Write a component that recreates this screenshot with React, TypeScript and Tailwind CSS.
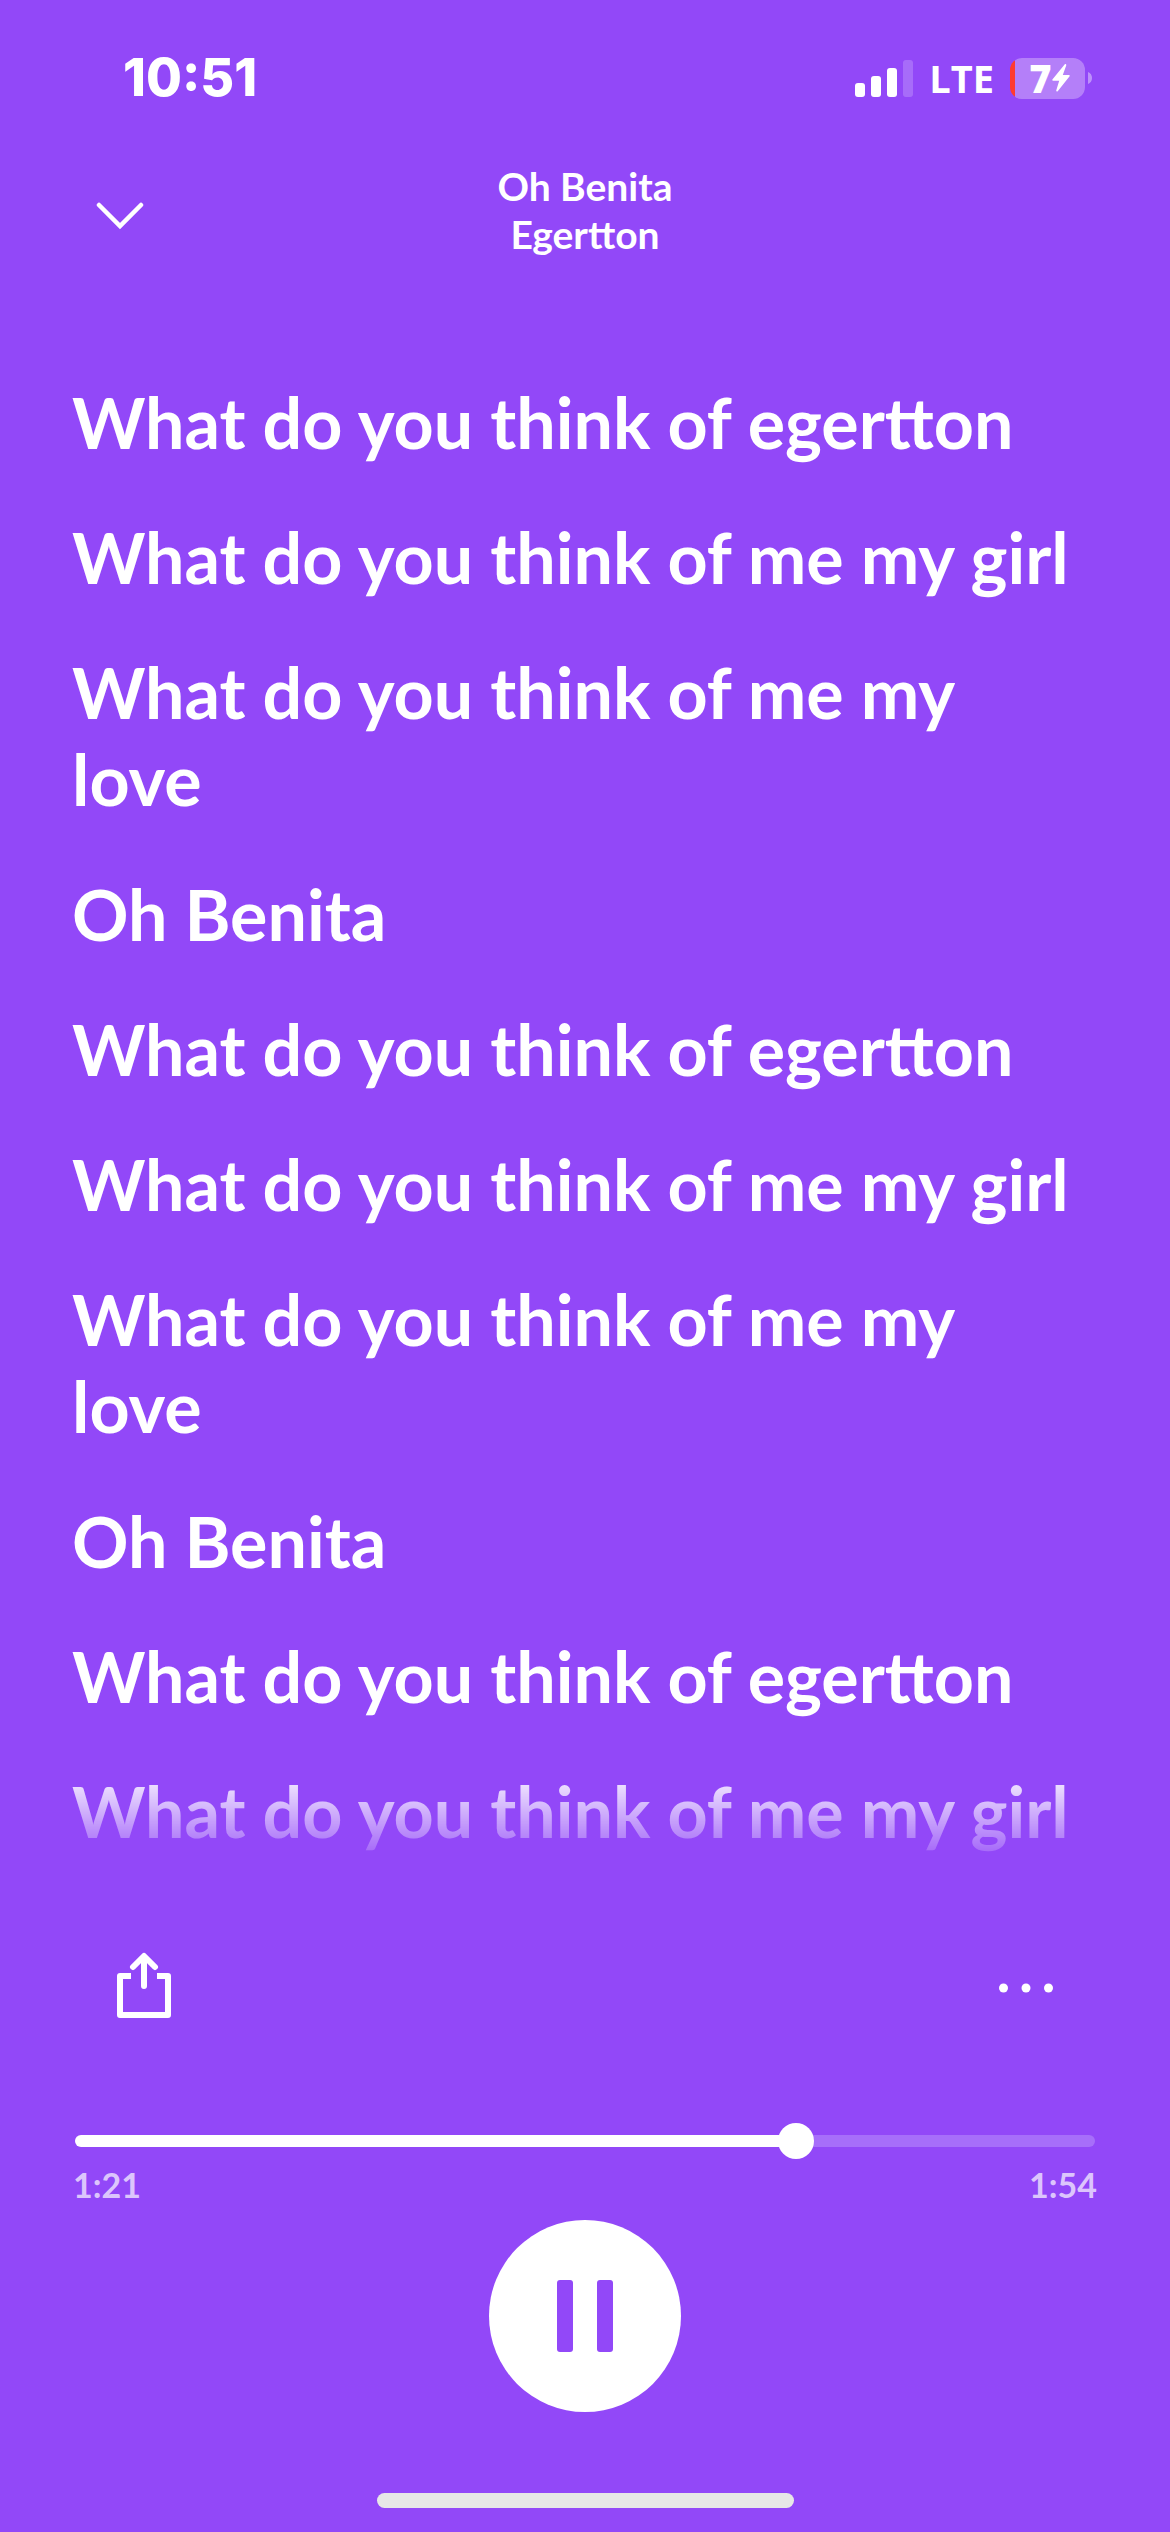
import React, { useState } from 'react';

const lyrics = [
  'What do you think of egertton',
  'What do you think of me my girl',
  'What do you think of me my love',
  'Oh Benita',
  'What do you think of egertton',
  'What do you think of me my girl',
  'What do you think of me my love',
  'Oh Benita',
  'What do you think of egertton',
  'What do you think of me my girl',
];

const StatusBar: React.FC = () => (
  <div className="flex h-[156px] items-center justify-between pl-[123px] pr-[78px] text-white">
    <span className="font-['Inter',sans-serif] text-[52px] leading-none font-extrabold">10:51</span>
    <div className="flex items-center gap-4">
      <svg width="58" height="38" viewBox="0 0 58 38" fill="currentColor" aria-label="Signal">
        <rect x="0" y="24" width="10" height="14" rx="3" />
        <rect x="16" y="17" width="10" height="21" rx="3" />
        <rect x="32" y="9" width="10" height="29" rx="3" />
        <rect x="48" y="1" width="10" height="37" rx="3" opacity="0.2" />
      </svg>
      <span className="font-['Open_Sans',sans-serif] text-[38px] leading-none font-bold">LTE</span>
      <div className="flex items-center gap-[3px]">
        <div className="flex h-[41px] w-[75px] items-center justify-center rounded-xl bg-[linear-gradient(to_right,#ff3b30_5px,#b47ff9_5px)] pl-1">
          <span className="font-['Open_Sans',sans-serif] text-[38px] leading-none font-extrabold">7</span>
          <svg width="18" height="28" viewBox="0 0 18 28" fill="currentColor" aria-label="Charging">
            <path d="M12.6.6.6 15.2c-.7.9-.4 1.5.6 1.5h6L4.3 26.2c-.4 1.3.8 1.8 1.6.8L17.4 12.5c.7-.9.4-1.5-.6-1.5h-6l3.4-9.6c.4-1.2-.8-1.8-1.6-.8Z" />
          </svg>
        </div>
        <svg width="4" height="12" viewBox="0 0 4 12" fill="#fff" opacity="0.4">
          <path d="M0 0c2.5 1 4 3 4 6s-1.5 5-4 6Z" />
        </svg>
      </div>
    </div>
  </div>
);

const App: React.FC = () => {
  const [position, setPosition] = useState(81.44);
  const percent = (position / 114) * 100;

  return (
    <div className="flex min-h-screen flex-col bg-[#9248f8] font-['Lato',sans-serif] text-white">
      <StatusBar />

      <header className="mt-[6px] grid grid-cols-[1fr_auto_1fr] items-center px-[96px]">
        <button type="button" aria-label="Close lyrics" className="w-12 pt-3">
          <svg width="48" height="28" viewBox="0 0 48 28" fill="none" stroke="#fff" strokeWidth="4.5" strokeLinecap="round">
            <path d="M3 3 24 24 45 3" />
          </svg>
        </button>
        <div className="text-center text-[39px] leading-[48px] font-bold">
          <h1>Oh Benita</h1>
          <p>Egertton</p>
        </div>
      </header>

      <main className="mt-[121px] flex flex-1 flex-col gap-12 px-[72px] pb-4 text-[70px] leading-[87px] font-bold mask-[linear-gradient(to_bottom,#000_calc(100%-106px),transparent)]">
        {lyrics.map((line, i) => (
          <p key={i}>{line}</p>
        ))}
      </main>

      <footer className="flex flex-col">
        <div className="flex items-center justify-between px-[116px] pt-[80px]">
          <button type="button" aria-label="Share">
            <svg width="56" height="66" viewBox="0 0 56 66" fill="none" stroke="#fff" strokeWidth="6" strokeLinejoin="round">
              <path d="M15 24H4V63H52V24H41" />
              <path d="M28 34V5M17 15 28 4 39 15" strokeLinecap="round" />
            </svg>
          </button>
          <button type="button" aria-label="More options">
            <svg width="56" height="66" viewBox="0 0 56 66" fill="#fff">
              <circle cx="5.5" cy="36" r="4.5" />
              <circle cx="28" cy="36" r="4.5" />
              <circle cx="50.5" cy="36" r="4.5" />
            </svg>
          </button>
        </div>

        <div className="px-[75px] pt-[117px]">
          <input
            type="range"
            aria-label="Playback position"
            min={0}
            max={114}
            step="any"
            value={position}
            onChange={(e) => setPosition(Number(e.target.value))}
            style={{
              backgroundImage: `linear-gradient(to right, #fff ${percent}%, #a76efa ${percent}%)`,
            }}
            className="block h-3 w-full appearance-none rounded-full [&::-webkit-slider-thumb]:size-9 [&::-webkit-slider-thumb]:appearance-none [&::-webkit-slider-thumb]:rounded-full [&::-webkit-slider-thumb]:bg-white"
          />
        </div>
        <div className="mt-4 flex justify-between px-[73px] text-[34px] leading-[44px] font-bold text-white/70">
          <span>1:21</span>
          <span>1:54</span>
        </div>

        <div className="flex justify-center pt-[13px]">
          <button type="button" aria-label="Pause" className="flex size-48 items-center justify-center gap-6 rounded-full bg-white">
            <span className="h-[72px] w-4 rounded-[3px] bg-[#9248f8]" />
            <span className="h-[72px] w-4 rounded-[3px] bg-[#9248f8]" />
          </button>
        </div>

        <div className="mx-auto mt-[81px] mb-6 h-[15px] w-[417px] rounded-full bg-[#e7e7e7]" />
      </footer>
    </div>
  );
};

export default App;
